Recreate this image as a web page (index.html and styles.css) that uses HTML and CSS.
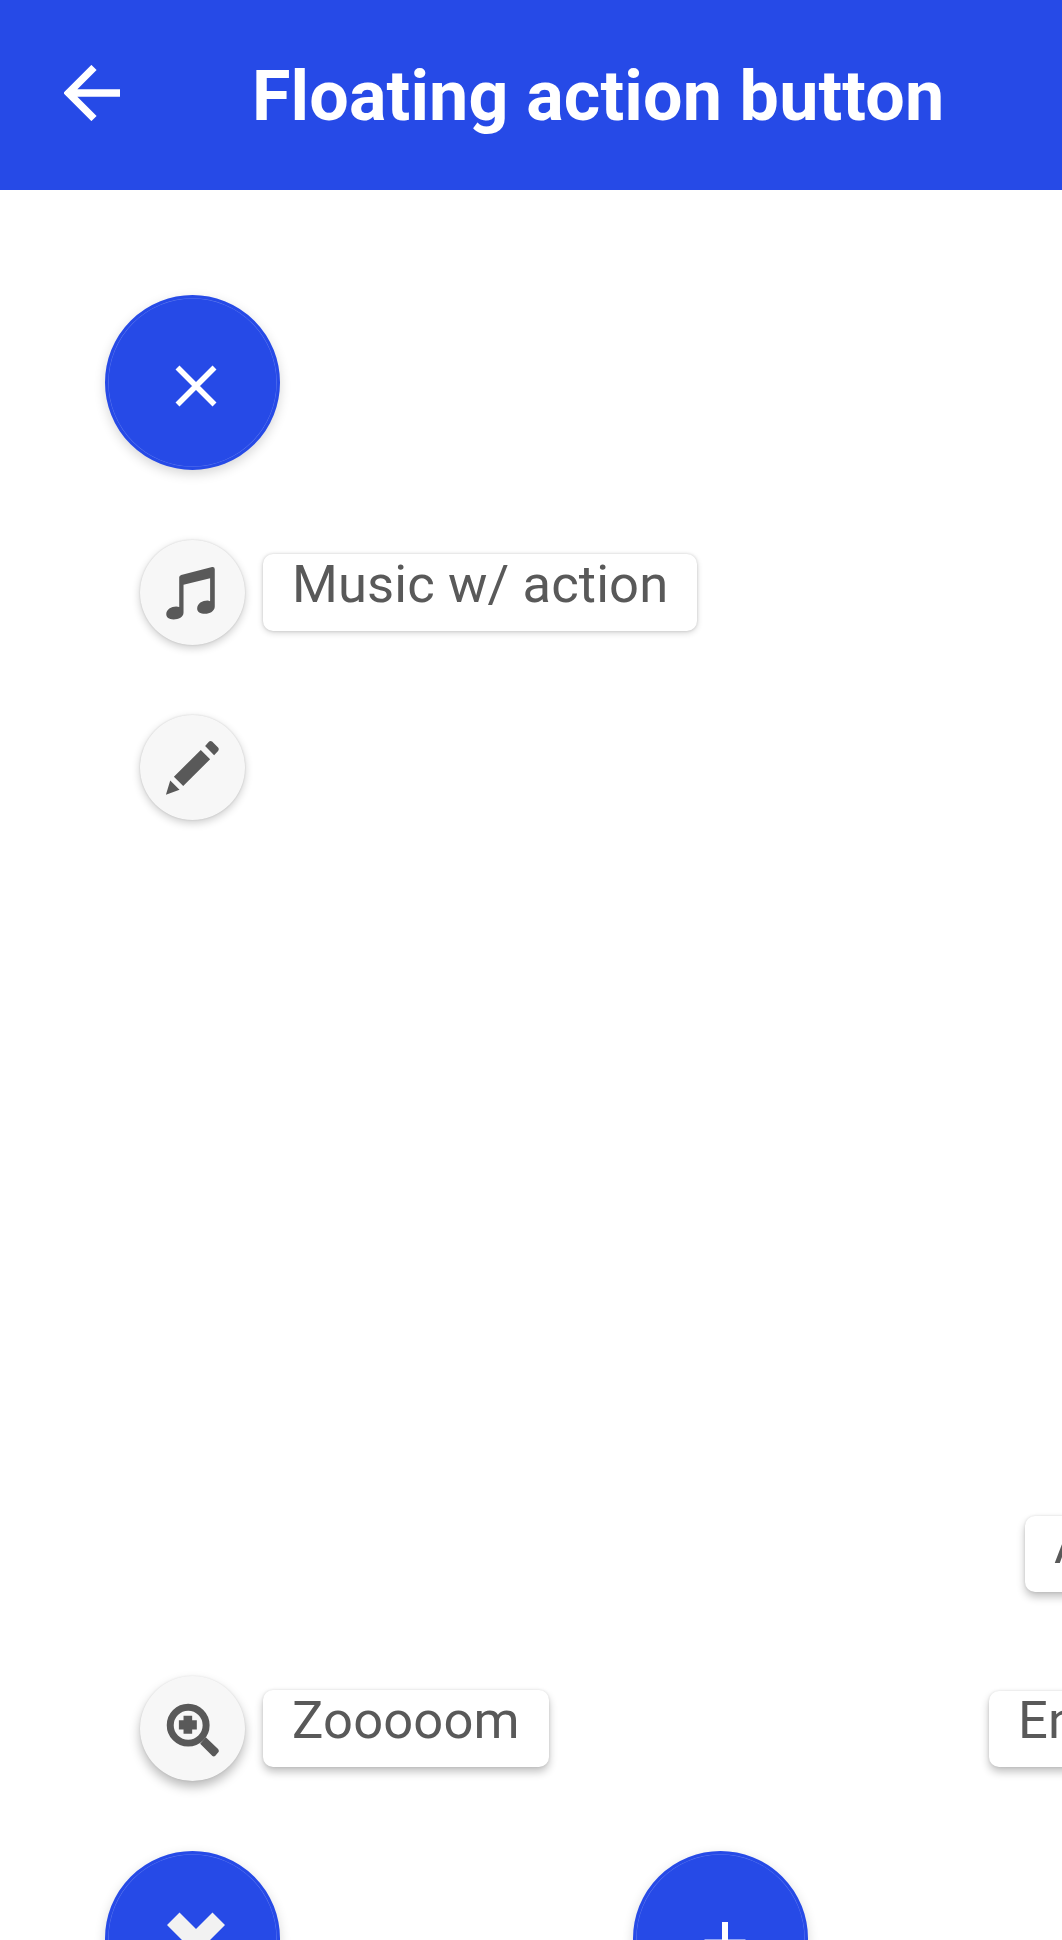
FILE: index.html
```html
<!DOCTYPE html>
<html lang="en">
<head>
<meta charset="utf-8">
<title>Floating action button</title>
<link rel="stylesheet" href="styles.css">
</head>
<body>
<header class="bar">
  <svg class="back" viewBox="0 0 56 56" aria-label="Back"><path d="M30 2.5 4.5 28 30 53.5M5 28H56" fill="none" stroke="#fff" stroke-width="7.4"/></svg>
  <h1 class="title">Floating action button</h1>
</header>
<main class="content">
  <section class="menu">
    <button class="fab"><svg viewBox="0 0 175 175"><path d="M72.5 72.500 109.500 109.500M109.500 72.500 72.500 109.500" fill="none" stroke="#fff" stroke-width="5.600"/></svg></button>
    <div class="item">
      <span class="mini"><svg viewBox="60 58 316 316"><path d="M178 170Q178 165 184 163L277 139Q285 138 285 146V258C285 272 270 280 256 280 241 280 232 274 232 264 232 249 248 240 263 240Q267 240 271 242V173L191 193V276C191 290 176 297 161 297 147 297 139 291 139 281 139 267 154 258 169 258Q174 258 178 260Z"/></svg></span>
      <span class="label">Music w/ action</span>
    </div>
    <div class="item">
      <span class="mini"><svg viewBox="60 583 316 316"><path d="M256 676 268 663Q272 659 277 663L295 681Q299 686 295 691L283 704ZM243 688 271 716 190 797 162 769ZM151 780 179 808 138 823Z"/></svg></span>
    </div>
  </section>
  <section class="dock">
    <div class="stack">
      <div class="item">
        <span class="mini raised"><svg viewBox="60 45 316 316"><circle cx="205" cy="193" r="54" fill="none" stroke="#595959" stroke-width="21"/><path d="M191 165H217V178H231V206H217V219H191V206H177V178H191ZM258 229 295 265Q298 268 297 273L286 286Q282 289 278 286L241 249Z"/></svg></span>
        <span class="label raised">Zooooom</span>
      </div>
      <button class="fab raised"><svg viewBox="0 0 175 175"><path d="M91 78 107.500 61.500 120 74 103.500 90.500 120 107 107.500 119.500 91 103 74.500 119.500 62 107 78.500 90.500 62 74 74.500 61.500Z" fill="#f2f2f2"/></svg></button>
    </div>
    <button class="fab raised"><svg viewBox="0 0 175 175"><path d="M92 71V112M71.500 91.500H112.500" fill="none" stroke="#fff" stroke-width="6"/></svg></button>
    <div class="labels">
      <span class="label raised">A</span>
      <span class="label raised">En</span>
    </div>
  </section>
</main>
</body>
</html>
```

FILE: styles.css
```css
* { box-sizing: border-box; }

html { overflow: hidden; }

body {
  width: 1062px;
  height: 1940px;
  margin: 0;
  overflow: hidden;
  background: #fff;
  color: #595959;
  font-family: Roboto, sans-serif;
}

.bar {
  display: flex;
  align-items: center;
  height: 190px;
  padding: 0 0 4px 64px;
  background: #264ae7;
}

.back { width: 56px; height: 56px; }

.title {
  margin: 6px 0 0 132px;
  color: #fff;
  font-size: 70px;
  line-height: 82px;
  font-weight: 700;
  letter-spacing: .16px;
  white-space: nowrap;
}

.content {
  display: flex;
  flex-direction: column;
  justify-content: space-between;
  height: 1836px;
  padding: 105px 0 0 105px;
}

.menu, .stack {
  display: flex;
  flex-direction: column;
  gap: 70px;
}

.fab {
  flex: none;
  display: block;
  width: 175px;
  height: 175px;
  padding: 0;
  border: 3.5px solid #264ae7;
  border-radius: 50%;
  background: #264ae7;
  box-shadow: 0 4px 12px rgba(0, 0, 0, .16), inset 0 0 0 .6px rgba(255, 255, 255, .25);
}

.fab svg { display: block; width: 175px; height: 175px; margin: -3px; }

.item {
  display: flex;
  align-items: center;
  gap: 18px;
  height: 105px;
  padding-left: 35px;
}

.mini {
  width: 105px;
  height: 105px;
  border-radius: 50%;
  background: #f7f7f7;
  box-shadow: 0 3px 8px rgba(0, 0, 0, .2), 0 0 2px rgba(0, 0, 0, .14);
}

.mini svg { display: block; width: 100%; height: 100%; fill: #595959; }

.label {
  height: 77px;
  padding: 0 29px;
  border-radius: 10px;
  background: #fff;
  box-shadow: 0 2px 6px rgba(0, 0, 0, .16), 0 0 3px rgba(0, 0, 0, .15);
  font-size: 52.5px;
  line-height: 60px;
  letter-spacing: .14px;
  white-space: nowrap;
}

.mini.raised { box-shadow: 0 6px 11px rgba(0, 0, 0, .27), 0 0 2px rgba(0, 0, 0, .1); }
.label.raised { box-shadow: 0 5px 9px rgba(0, 0, 0, .24), 0 0 3px rgba(0, 0, 0, .12); }

.dock {
  display: flex;
  align-items: flex-end;
  height: 511px;
}

.stack { flex: none; width: 528px; }

.labels {
  flex: none;
  display: flex;
  flex-direction: column;
  align-items: flex-start;
  gap: 99px;
  width: 88px;
  height: 511px;
  margin: 0 0 9.4px 166px;
  padding: 10px 0 0 15px;
}

.labels .label {
  width: 120px;
  height: 76px;
  padding: 0 0 0 29px;
  line-height: 59px;
}

.labels .label:first-child { margin-left: 36px; }
```
